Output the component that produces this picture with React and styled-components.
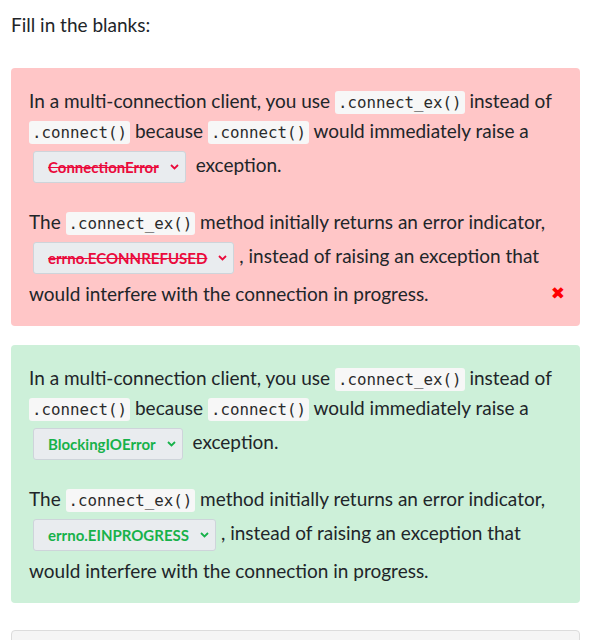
import React from "react";
import styled, { createGlobalStyle } from "styled-components";

const Global = createGlobalStyle`
  html, body { margin: 0; padding: 0; background: #fff; }
  body {
    font-family: "Source Sans Pro", "Lato", "Noto Sans", sans-serif;
    color: #212529;
    font-size: 19px;
  }
`;

const Page = styled.div`
  padding: 0 17px 0 11px;
`;

const Title = styled.p`
  margin: 12px 0 30px;
  font-size: 19px;
  line-height: 26px;
`;

const Card = styled.div`
  position: relative;
  border-radius: 4px;
  padding: 18px 18px 17px;
  margin-bottom: 19px;
  background: ${(p) => (p.$ok ? "#cdf0d9" : "#ffc6c7")};
`;

const Para = styled.p`
  margin: 0 0 19px;
  line-height: 30px;
  font-size: 19px;
  &:last-of-type { margin-bottom: 0; }
`;

const Code = styled.code`
  font-family: "DejaVu Sans Mono", monospace;
  font-size: 15.8px;
  line-height: 1;
  background: #f7f7f7;
  border-radius: 3px;
  padding: 2px 3px;
  color: #2b2b2b;
`;

const Select = styled.span`
  display: inline-flex;
  align-items: center;
  justify-content: space-between;
  box-sizing: border-box;
  height: 32px;
  vertical-align: middle;
  margin: 5px 5px 5px 4px;
  padding: 0 6px 0 14px;
  gap: 11px;
  background: #e9ecef;
  border: 1px solid #ced4da;
  border-radius: 3px;
  font-size: 15px;
  line-height: 1;
  font-weight: 700;
  color: ${(p) => (p.$ok ? "#17b24a" : "#ea0a3c")};
  text-decoration: ${(p) => (p.$ok ? "none" : "line-through")};
`;

const Chevron = styled.svg`
  width: 9px;
  height: 6px;
  flex: none;
`;

const Mark = styled.span`
  position: absolute;
  right: 15px;
  bottom: 24px;
  color: #ff0000;
  font-size: 17px;
  line-height: 1;
  font-family: "DejaVu Sans", sans-serif;
`;

const NextCard = styled.div`
  margin-top: 27px;
  height: 40px;
  background: #f5f5f5;
  border: 1px solid #dcdcdc;
  border-radius: 4px;
`;

function Drop({ ok, children }) {
  return (
    <Select $ok={ok}>
      <span>{children}</span>
      <Chevron viewBox="0 0 9 6">
        <polyline points="1,1 4.5,4.5 8,1" fill="none" stroke="currentColor" strokeWidth="1.8" />
      </Chevron>
    </Select>
  );
}

function Question({ ok, a, b }) {
  return (
    <Card $ok={ok}>
      <Para>
        In a multi-connection client, you use <Code>.connect_ex()</Code> instead of{" "}
        <Code>.connect()</Code> because <Code>.connect()</Code> would immediately raise a{" "}
        <Drop ok={ok}>{a}</Drop> exception.
      </Para>
      <Para>
        The <Code>.connect_ex()</Code> method initially returns an error indicator,{" "}
        <Drop ok={ok}>{b}</Drop>, instead of raising an exception that would interfere with the
        connection in progress.
      </Para>
      {!ok && <Mark>✖</Mark>}
    </Card>
  );
}

export default function App() {
  return (
    <Page>
      <Global />
      <Title>Fill in the blanks:</Title>
      <Question ok={false} a="ConnectionError" b="errno.ECONNREFUSED" />
      <Question ok a="BlockingIOError" b="errno.EINPROGRESS" />
      <NextCard />
    </Page>
  );
}
